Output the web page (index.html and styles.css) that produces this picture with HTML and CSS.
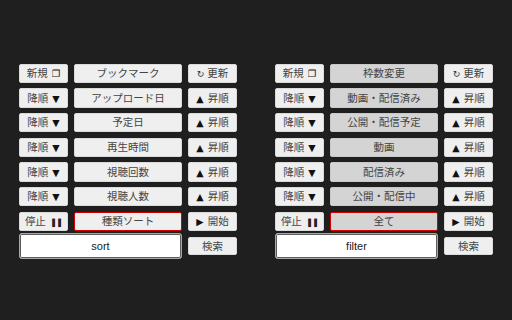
FILE: index.html
```html
<!DOCTYPE html>
<html lang="ja">
<head>
<meta charset="utf-8">
<link rel="stylesheet" href="styles.css">
</head>
<body>
<div class="app">
  <section class="panel">
    <div class="grid">
      <button class="btn">新規<span class="ic sq after">❐</span></button>
      <button class="btn">ブックマーク</button>
      <button class="btn"><span class="ic re before">↻</span>更新</button>

      <button class="btn">降順<span class="ic after">▼</span></button>
      <button class="btn">アップロード日</button>
      <button class="btn"><span class="ic before">▲</span>昇順</button>

      <button class="btn">降順<span class="ic after">▼</span></button>
      <button class="btn">予定日</button>
      <button class="btn"><span class="ic before">▲</span>昇順</button>

      <button class="btn">降順<span class="ic after">▼</span></button>
      <button class="btn">再生時間</button>
      <button class="btn"><span class="ic before">▲</span>昇順</button>

      <button class="btn">降順<span class="ic after">▼</span></button>
      <button class="btn">視聴回数</button>
      <button class="btn"><span class="ic before">▲</span>昇順</button>

      <button class="btn">降順<span class="ic after">▼</span></button>
      <button class="btn">視聴人数</button>
      <button class="btn"><span class="ic before">▲</span>昇順</button>

      <button class="btn">停止<span class="ic pause after">❚❚</span></button>
      <button class="btn selected">種類ソート</button>
      <button class="btn"><span class="ic before">▶</span>開始</button>
    </div>
    <div class="search">
      <input class="field" type="text" value="sort">
      <button class="btn go">検索</button>
    </div>
  </section>

  <section class="panel">
    <div class="grid">
      <button class="btn">新規<span class="ic sq after">❐</span></button>
      <button class="btn dim">枠数変更</button>
      <button class="btn"><span class="ic re before">↻</span>更新</button>

      <button class="btn">降順<span class="ic after">▼</span></button>
      <button class="btn dim">動画・配信済み</button>
      <button class="btn"><span class="ic before">▲</span>昇順</button>

      <button class="btn">降順<span class="ic after">▼</span></button>
      <button class="btn dim">公開・配信予定</button>
      <button class="btn"><span class="ic before">▲</span>昇順</button>

      <button class="btn">降順<span class="ic after">▼</span></button>
      <button class="btn dim">動画</button>
      <button class="btn"><span class="ic before">▲</span>昇順</button>

      <button class="btn">降順<span class="ic after">▼</span></button>
      <button class="btn dim">配信済み</button>
      <button class="btn"><span class="ic before">▲</span>昇順</button>

      <button class="btn">降順<span class="ic after">▼</span></button>
      <button class="btn dim">公開・配信中</button>
      <button class="btn"><span class="ic before">▲</span>昇順</button>

      <button class="btn">停止<span class="ic pause after">❚❚</span></button>
      <button class="btn dim selected">全て</button>
      <button class="btn"><span class="ic before">▶</span>開始</button>
    </div>
    <div class="search">
      <input class="field" type="text" value="filter">
      <button class="btn go">検索</button>
    </div>
  </section>
</div>
</body>
</html>
```

FILE: styles.css
```css
html, body {
  margin: 0;
  padding: 0;
  background: #1f1f1f;
}

.app {
  display: flex;
  width: 512px;
  height: 320px;
}

.panel {
  width: 256px;
  box-sizing: border-box;
  padding: 63.5px 0 0 19px;
  display: flex;
  flex-direction: column;
}

.grid {
  display: grid;
  grid-template-columns: 49px 108px 49px;
  grid-auto-rows: 19.5px;
  column-gap: 6px;
  row-gap: 5.2px;
  width: 218px;
}

.btn {
  margin: 0;
  padding: 0;
  box-sizing: border-box;
  background: #efefef;
  border: 1px solid #dadada;
  border-radius: 2px;
  font-family: "Noto Sans CJK JP", "DejaVu Sans", sans-serif;
  font-size: 10.5px;
  line-height: 1;
  color: #444;
  text-align: center;
  white-space: nowrap;
}

.btn.dim {
  background: #d4d4d4;
  border-color: #c8c8c8;
}

.btn.selected {
  border: 1.5px solid #d40000;
}

.ic {
  font-family: "DejaVu Sans", sans-serif;
  font-size: 9.5px;
  color: #111;
}

.ic.after {
  margin-left: 4px;
}

.ic.before {
  margin-right: 4px;
}

.ic.sq {
  font-size: 9.5px;
}

.ic.re {
  font-size: 9px;
  color: #333;
  margin-right: 3px;
}

.ic.pause {
  font-size: 8.5px;
  letter-spacing: -1px;
  color: #222;
}

.search {
  display: flex;
  align-items: center;
  gap: 6px;
  margin-top: 2px;
  width: 218px;
}

.field {
  box-sizing: border-box;
  width: 163px;
  height: 26px;
  margin: 0;
  padding: 0;
  background: #ffffff;
  border: 1px solid #a8a8a8;
  border-radius: 3px;
  box-shadow: inset 0 0 0 1px #5c5c5c;
  font-family: "Liberation Sans", Arial, sans-serif;
  font-size: 11px;
  color: #222;
  text-align: center;
  outline: none;
}

.btn.go {
  width: 49px;
  height: 17.5px;
}
```
